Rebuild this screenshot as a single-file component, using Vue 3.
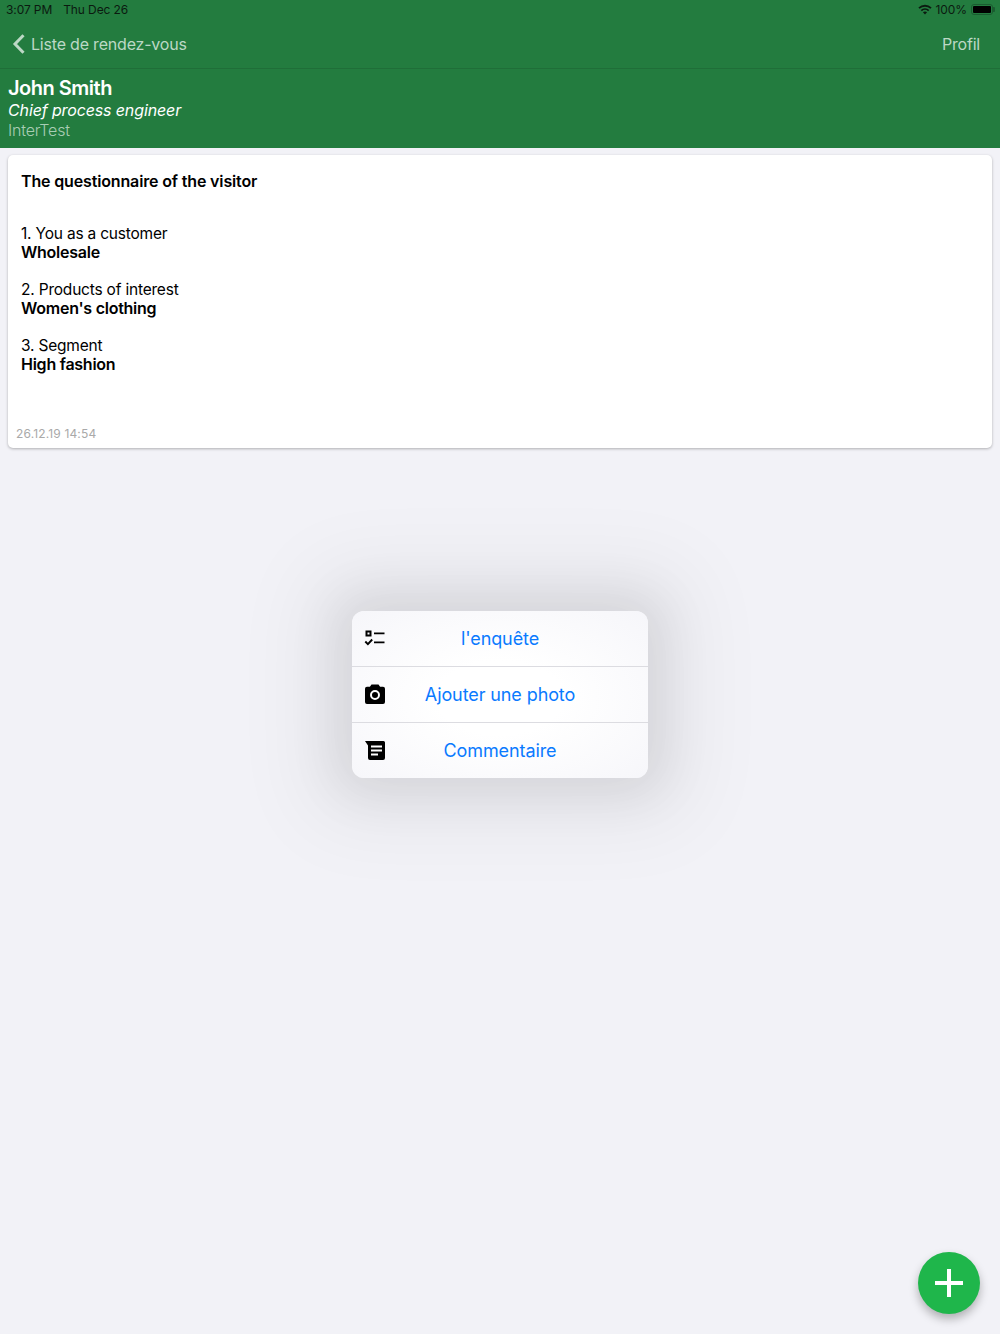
<script setup>
const answers = [
  { q: '1. You as a customer', a: 'Wholesale' },
  { q: '2. Products of interest', a: "Women's clothing" },
  { q: '3. Segment', a: 'High fashion' },
]
</script>

<template>
  <div class="page">
    <header class="head">
      <div class="status">
        <div class="status-left"><span>3:07 PM</span><span>Thu Dec 26</span></div>
        <div class="status-right">
          <svg class="wifi" width="14" height="11" viewBox="0 0 14 11">
            <path d="M1 4.200C4.400 .9 9.600 .9 13 4.200" fill="none" stroke="#0b1a10" stroke-width="1.800"/>
            <path d="M3.300 6.600C5.400 4.700 8.600 4.700 10.700 6.600" fill="none" stroke="#0b1a10" stroke-width="1.800"/>
            <path d="M4.900 8.300C6.100 7.200 7.900 7.200 9.100 8.300L7 10.600z" fill="#0b1a10"/>
          </svg>
          <span>100%</span>
          <span class="battery"><i></i></span>
        </div>
      </div>
      <nav class="nav">
        <div class="back">
          <svg width="14" height="20" viewBox="0 0 14 20"><path d="M11.500 1.200L3 10l8.500 8.800" fill="none" stroke="#bcd8c5" stroke-width="3"/></svg>
          <span>Liste de rendez-vous</span>
        </div>
        <span class="profil">Profil</span>
      </nav>
      <div class="person">
        <div class="name">John Smith</div>
        <div class="role">Chief process engineer</div>
        <div class="company">InterTest</div>
      </div>
    </header>

    <section class="card">
      <h2 class="title">The questionnaire of the visitor</h2>
      <div class="answers">
        <div v-for="item in answers" :key="item.q" class="answer">
          <div>{{ item.q }}</div>
          <strong>{{ item.a }}</strong>
        </div>
      </div>
      <div class="stamp">26.12.19 14:54</div>
    </section>

    <div class="menu">
      <div class="row">
        <svg class="icon" width="24" height="24" viewBox="0 0 24 24">
          <path d="M2.500 4.500h6v6h-6zM4.500 6.500v2h2v-2z" fill="#000" fill-rule="evenodd"/>
          <path d="M11 6.500h10.500v1.800H11zM11 15.500h10.500v1.800H11z" fill="#000"/>
          <path d="M2.300 15.500l2.600 2.700 4.300-4.700" fill="none" stroke="#000" stroke-width="1.900"/>
        </svg>
        <span>l'enquête</span>
      </div>
      <div class="row">
        <svg class="icon" width="24" height="24" viewBox="0 0 24 24">
          <path d="M8.500 2.500h7l1.600 2.300H20a2 2 0 0 1 2 2V20a2 2 0 0 1-2 2H4a2 2 0 0 1-2-2V6.800a2 2 0 0 1 2-2h2.900z" fill="#000"/>
          <circle cx="12" cy="13" r="4" fill="none" stroke="#fff" stroke-width="2"/>
        </svg>
        <span>Ajouter une photo</span>
      </div>
      <div class="row">
        <svg class="icon" width="24" height="24" viewBox="0 0 24 24">
          <path d="M2 3h18.500A1.500 1.500 0 0 1 22 4.500V20a2 2 0 0 1-2 2H7a2 2 0 0 1-2-2V7.500z" fill="#000"/>
          <path d="M8 7.500h11v2H8zM8 11.500h11v2H8zM8 15.500h7v2H8z" fill="#fff"/>
        </svg>
        <span>Commentaire</span>
      </div>
    </div>

    <button class="fab" type="button" aria-label="Ajouter">
      <svg width="28" height="28" viewBox="0 0 28 28"><path d="M12 0h4v12h12v4H16v12h-4V16H0v-4h12z" fill="#fff"/></svg>
    </button>
  </div>
</template>

<style scoped>
.page {
  position: relative;
  height: 1334px;
  overflow: hidden;
  background: #f2f2f7;
  font-family: Inter, "Liberation Sans", sans-serif;
  color: #000;
}
.head {
  background: #237c3f;
}
.status {
  height: 20px;
  padding: 0 5px 2px 6px;
  box-sizing: border-box;
  display: flex;
  justify-content: space-between;
  align-items: center;
  font-size: 12px;
  letter-spacing: -.1px;
  color: #0b1a10;
}
.status-left {
  display: flex;
  gap: 11px;
}
.status-right {
  display: flex;
  align-items: center;
  gap: 4px;
}
.battery {
  position: relative;
  width: 22px;
  height: 11px;
  border: 1px solid #1a5c30;
  border-radius: 3px;
  padding: 1px;
  box-sizing: border-box;
  display: flex;
  margin-right: 2px;
}
.battery::after {
  content: "";
  position: absolute;
  right: -3px;
  top: 2px;
  width: 2px;
  height: 5px;
  background: #1a5c30;
  border-radius: 0 1px 1px 0;
}
.battery i {
  flex: 1;
  background: #000;
  border-radius: 1px;
}
.nav {
  height: 48px;
  padding: 0 20px 0 12px;
  display: flex;
  justify-content: space-between;
  align-items: center;
  border-bottom: 1px solid #1f6e38;
  font-size: 16px;
  letter-spacing: -.2px;
  color: #bcd8c5;
}
.back {
  display: flex;
  align-items: center;
  gap: 5px;
}
.person {
  height: 79px;
  padding: 7px 8px 0;
  box-sizing: border-box;
}
.name {
  font-size: 20px;
  font-weight: 600;
  line-height: 24px;
  letter-spacing: -.5px;
  color: #fff;
}
.role {
  font-size: 16px;
  font-style: italic;
  line-height: 20px;
  letter-spacing: -.13px;
  color: #fff;
}
.company {
  font-size: 16px;
  font-weight: 300;
  line-height: 20px;
  letter-spacing: -.2px;
  color: #a8cdb4;
}
.card {
  height: 293px;
  margin: 7px 8px 0;
  box-sizing: border-box;
  padding: 16px 13px 0;
  background: #fff;
  border-radius: 5px;
  box-shadow: 0 1px 3px rgba(0, 0, 0, .28);
  position: relative;
  display: flex;
  flex-direction: column;
  font-size: 15.5px;
  line-height: 19px;
  letter-spacing: -.2px;
}
.title {
  margin: 0 0 32px;
  font-size: 16px;
  line-height: 21px;
  font-weight: 600;
  letter-spacing: -.15px;
}
.answers {
  display: flex;
  flex-direction: column;
  gap: 18px;
}
.answer strong {
  font-size: 16px;
  font-weight: 600;
  letter-spacing: -.25px;
}
.stamp {
  margin: auto 0 6px -5px;
  font-size: 12px;
  line-height: 16px;
  letter-spacing: .15px;
  color: #a9a9a9;
}
.menu {
  position: absolute;
  left: 352px;
  top: 611px;
  width: 296px;
  height: 167px;
  border-radius: 12px;
  background: radial-gradient(ellipse at 50% 52%, #fff 30%, #f6f6fa 100%);
  box-shadow: 0 0 50px 15px rgba(0, 0, 0, .08), 0 0 80px 47px rgba(0, 0, 0, .05);
  display: flex;
  flex-direction: column;
}
.row {
  position: relative;
  flex: 1;
  display: flex;
  align-items: center;
  justify-content: center;
  font-size: 18px;
  letter-spacing: -.1px;
  color: #0a7aff;
}
.row + .row {
  border-top: 1px solid #dcdce1;
}
.icon {
  position: absolute;
  left: 11px;
  top: 50%;
  margin-top: -13px;
}
.fab {
  position: absolute;
  left: 918px;
  top: 1252px;
  width: 62px;
  height: 62px;
  padding: 0;
  border: 0;
  border-radius: 50%;
  background: #1fb64b;
  box-shadow: 0 5px 10px rgba(0, 0, 0, .28);
  display: flex;
  align-items: center;
  justify-content: center;
}
</style>
